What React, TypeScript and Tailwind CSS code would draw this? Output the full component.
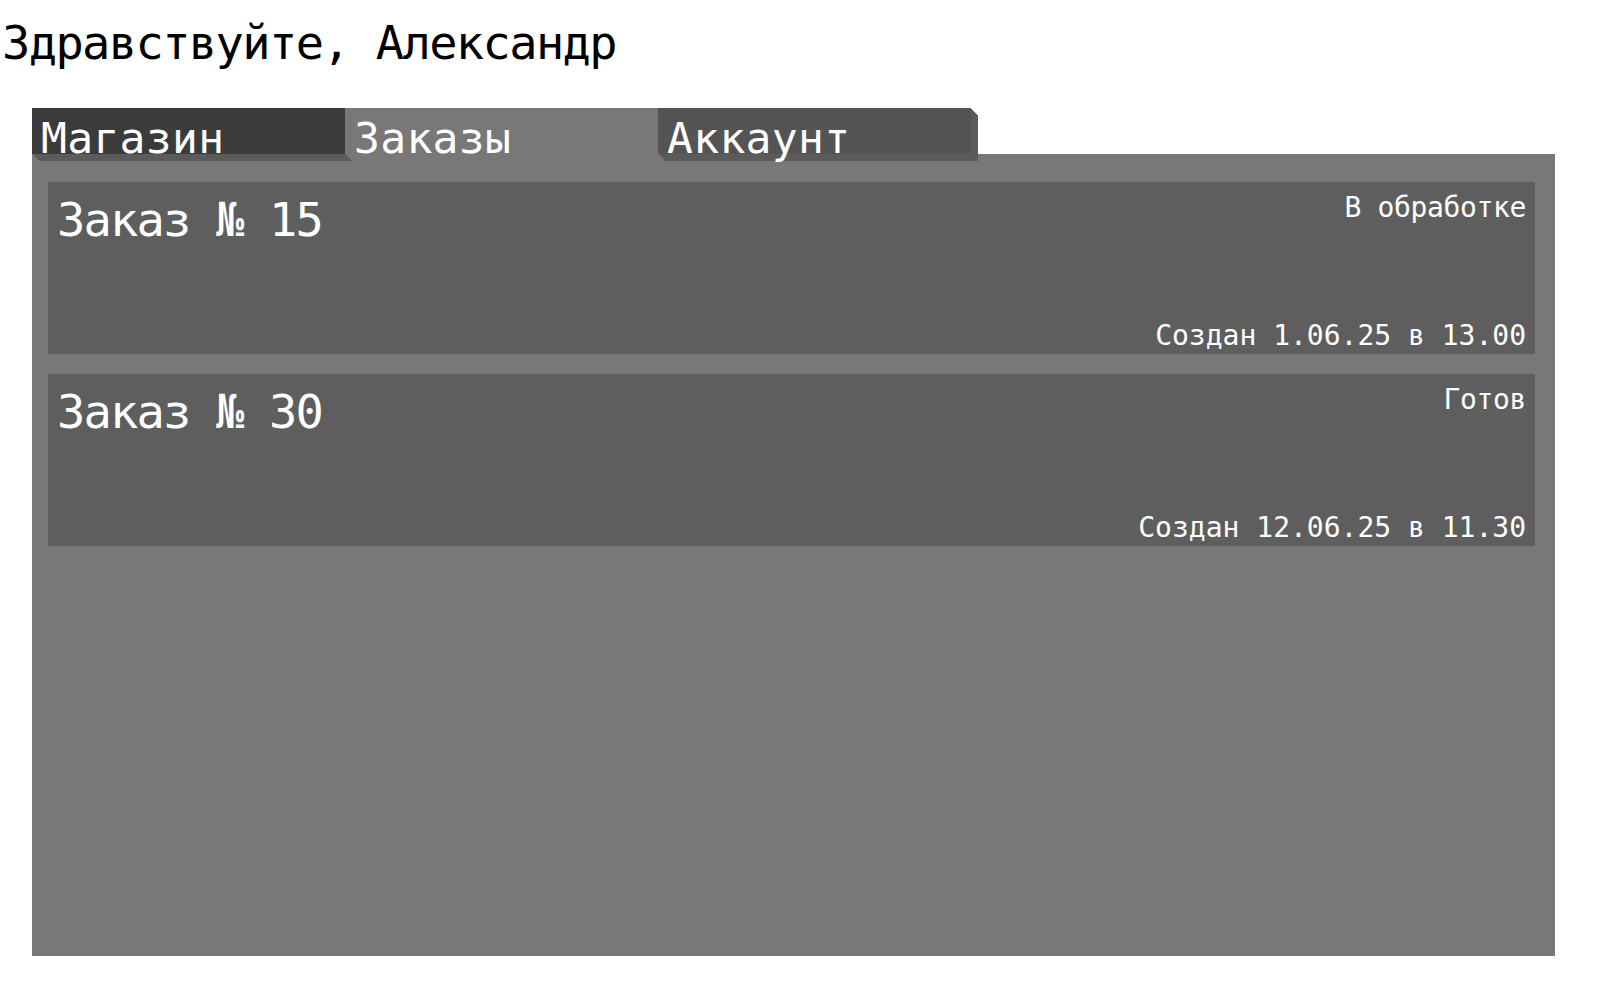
const tabs = [
  { label: "Магазин", bg: "bg-[#3b3b3b]", active: false },
  { label: "Заказы", bg: "bg-[#787878]", active: true },
  { label: "Аккаунт", bg: "bg-[#545454]", active: false },
];

const orders = [
  { id: 15, status: "В обработке", created: "Создан 1.06.25 в 13.00" },
  { id: 30, status: "Готов", created: "Создан 12.06.25 в 11.30" },
];

export default function App() {
  return (
    <div className="w-full h-[1000px] bg-white font-['DejaVu_Sans_Mono',monospace]">
      {/* Greeting */}
      <div className="pt-[19px] pl-[2px] text-[47px] leading-[47px] tracking-[-1.6px] text-black">
        Здравствуйте, Александр
      </div>

      {/* Tabs */}
      <div className="relative z-10 mt-[42px] ml-[32px] flex h-[46px]">
        {tabs.map((t) => (
          <div
            key={t.label}
            className={`w-[313px] h-[46px] pl-[9px] pt-[9px] text-[43px] leading-none tracking-[0.3px] text-white ${t.bg} ${
              t.active
                ? "shadow-[1px_1px_0_#787878,2px_2px_0_#787878,3px_3px_0_#787878,4px_4px_0_#787878,5px_5px_0_#787878,6px_6px_0_#787878,7px_7px_0_#787878]"
                : "shadow-[1px_1px_0_#5b5b5b,2px_2px_0_#5b5b5b,3px_3px_0_#5b5b5b,4px_4px_0_#5b5b5b,5px_5px_0_#5b5b5b,6px_6px_0_#5b5b5b,7px_7px_0_#5b5b5b]"
            }`}
          >
            {t.label}
          </div>
        ))}
      </div>

      {/* Orders panel */}
      <div className="ml-[32px] w-[1523px] h-[802px] bg-[#787878] pt-[28px] pl-[16px] flex flex-col gap-[20px]">
        {orders.map((o) => (
          <div
            key={o.id}
            className="w-[1487px] h-[172px] bg-[#5e5e5e] flex flex-col justify-between text-white"
          >
            <div className="flex justify-between items-start">
              <div className="mt-[14px] pl-[9px] text-[47px] leading-none tracking-[-1.8px]">
                Заказ № {o.id}
              </div>
              <div className="mt-[12px] pr-[9px] text-[28px] leading-none tracking-[-0.36px]">
                {o.status}
              </div>
            </div>
            <div className="self-end pr-[9px] pb-[4px] text-[28px] leading-none">
              {o.created}
            </div>
          </div>
        ))}
      </div>
    </div>
  );
}
